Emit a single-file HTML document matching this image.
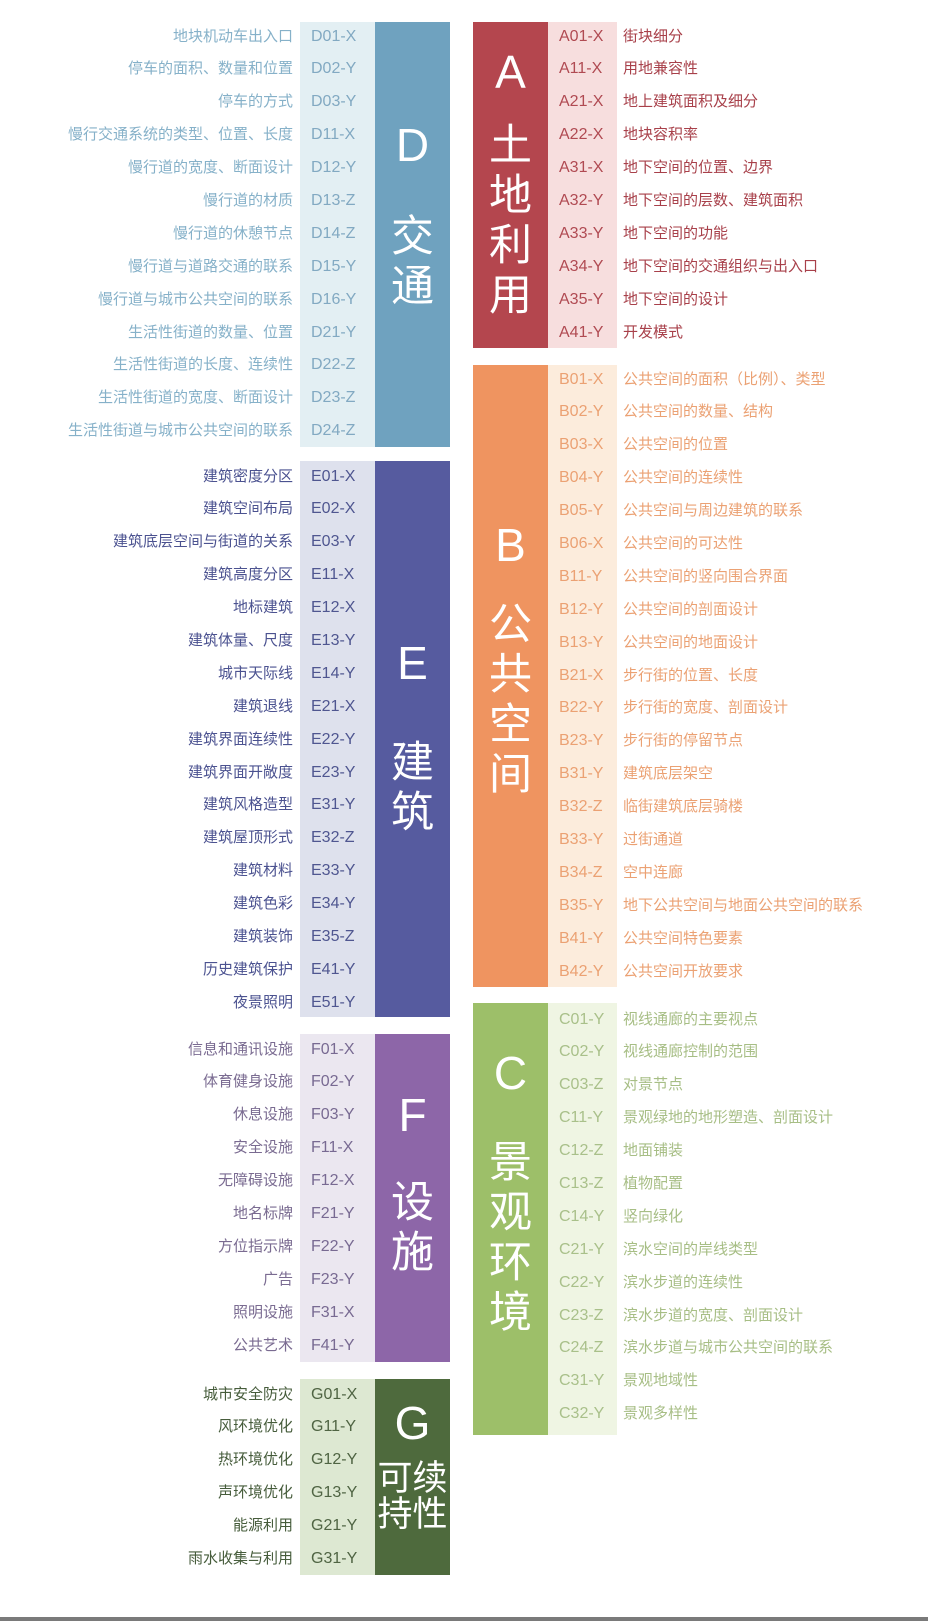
<!DOCTYPE html>
<html><head><meta charset="utf-8"><style>
body{margin:0;width:928px;height:1621px;background:#fff;position:relative;overflow:hidden;font-family:"Liberation Sans","Noto Sans CJK SC",sans-serif}
.abs{position:absolute}
.rows div{height:32.9px;line-height:32.9px;white-space:nowrap}
.lab{font-size:15px;text-align:right;width:293px;left:0}
.rlab{font-size:15px;left:623px}
.code{font-size:16px}
.bar{color:#fff;text-align:center}
.big{font-size:46px;line-height:50px;font-family:"Liberation Sans",sans-serif}
.cn{font-size:43px;line-height:50px;font-family:"Noto Sans CJK SC",sans-serif}
</style></head><body>
<div class="abs" style="left:300px;top:22px;width:75px;height:425px;background:#e3eff3"></div>
<div class="abs" style="left:375px;top:22px;width:75px;height:425px;background:#6fa2bf"></div>
<div class="abs" style="left:300px;top:461px;width:75px;height:556px;background:#dee1ed"></div>
<div class="abs" style="left:375px;top:461px;width:75px;height:556px;background:#565b9f"></div>
<div class="abs" style="left:300px;top:1034px;width:75px;height:328px;background:#ebe7f0"></div>
<div class="abs" style="left:375px;top:1034px;width:75px;height:328px;background:#8d66a8"></div>
<div class="abs" style="left:300px;top:1379px;width:75px;height:196px;background:#dde8d2"></div>
<div class="abs" style="left:375px;top:1379px;width:75px;height:196px;background:#4e6a3d"></div>

<div class="abs" style="left:473px;top:22px;width:75px;height:326px;background:#b4464e"></div>
<div class="abs" style="left:548px;top:22px;width:69px;height:326px;background:#f7dede"></div>
<div class="abs" style="left:473px;top:365px;width:75px;height:622px;background:#ef9460"></div>
<div class="abs" style="left:548px;top:365px;width:69px;height:622px;background:#fcecdc"></div>
<div class="abs" style="left:473px;top:1003px;width:75px;height:432px;background:#9dbf69"></div>
<div class="abs" style="left:548px;top:1003px;width:69px;height:432px;background:#eff5e3"></div>

<div class="abs bar" style="left:375px;width:75px;top:120px"><div class="big">D</div><div class="cn" style="margin-top:38px">交<br>通</div></div>
<div class="abs bar" style="left:375px;width:75px;top:638px"><div class="big">E</div><div class="cn" style="margin-top:46px">建<br>筑</div></div>
<div class="abs bar" style="left:375px;width:75px;top:1090px"><div class="big">F</div><div class="cn" style="margin-top:34px">设<br>施</div></div>
<div class="abs bar" style="left:375px;width:75px;top:1398px"><div class="big">G</div><div style="font-family:'Noto Sans CJK SC',sans-serif;font-size:35px;line-height:36px;margin-top:10px">可续<br>持性</div></div>
<div class="abs bar" style="left:473px;width:75px;top:47px"><div class="big">A</div><div class="cn" style="margin-top:20px">土<br>地<br>利<br>用</div></div>
<div class="abs bar" style="left:473px;width:75px;top:520px"><div class="big">B</div><div class="cn" style="margin-top:26px">公<br>共<br>空<br>间</div></div>
<div class="abs bar" style="left:473px;width:75px;top:1048px"><div class="big">C</div><div class="cn" style="margin-top:36px">景<br>观<br>环<br>境</div></div>

<div class="abs rows lab" style="top:20.5px;color:#86b1c9"><div>地块机动车出入口</div><div>停车的面积、数量和位置</div><div>停车的方式</div><div>慢行交通系统的类型、位置、长度</div><div>慢行道的宽度、断面设计</div><div>慢行道的材质</div><div>慢行道的休憩节点</div><div>慢行道与道路交通的联系</div><div>慢行道与城市公共空间的联系</div><div>生活性街道的数量、位置</div><div>生活性街道的长度、连续性</div><div>生活性街道的宽度、断面设计</div><div>生活性街道与城市公共空间的联系</div></div>
<div class="abs rows code" style="left:311px;top:20.5px;color:#82a9c2"><div>D01-X</div><div>D02-Y</div><div>D03-Y</div><div>D11-X</div><div>D12-Y</div><div>D13-Z</div><div>D14-Z</div><div>D15-Y</div><div>D16-Y</div><div>D21-Y</div><div>D22-Z</div><div>D23-Z</div><div>D24-Z</div></div>
<div class="abs rows lab" style="top:460.5px;color:#4b5290"><div>建筑密度分区</div><div>建筑空间布局</div><div>建筑底层空间与街道的关系</div><div>建筑高度分区</div><div>地标建筑</div><div>建筑体量、尺度</div><div>城市天际线</div><div>建筑退线</div><div>建筑界面连续性</div><div>建筑界面开敞度</div><div>建筑风格造型</div><div>建筑屋顶形式</div><div>建筑材料</div><div>建筑色彩</div><div>建筑装饰</div><div>历史建筑保护</div><div>夜景照明</div></div>
<div class="abs rows code" style="left:311px;top:460.5px;color:#4f5690"><div>E01-X</div><div>E02-X</div><div>E03-Y</div><div>E11-X</div><div>E12-X</div><div>E13-Y</div><div>E14-Y</div><div>E21-X</div><div>E22-Y</div><div>E23-Y</div><div>E31-Y</div><div>E32-Z</div><div>E33-Y</div><div>E34-Y</div><div>E35-Z</div><div>E41-Y</div><div>E51-Y</div></div>
<div class="abs rows lab" style="top:1033.5px;color:#7a6b91"><div>信息和通讯设施</div><div>体育健身设施</div><div>休息设施</div><div>安全设施</div><div>无障碍设施</div><div>地名标牌</div><div>方位指示牌</div><div>广告</div><div>照明设施</div><div>公共艺术</div></div>
<div class="abs rows code" style="left:311px;top:1033.5px;color:#786a92"><div>F01-X</div><div>F02-Y</div><div>F03-Y</div><div>F11-X</div><div>F12-X</div><div>F21-Y</div><div>F22-Y</div><div>F23-Y</div><div>F31-X</div><div>F41-Y</div></div>
<div class="abs rows lab" style="top:1378.5px;color:#465c3b"><div>城市安全防灾</div><div>风环境优化</div><div>热环境优化</div><div>声环境优化</div><div>能源利用</div><div>雨水收集与利用</div></div>
<div class="abs rows code" style="left:311px;top:1378.5px;color:#4f6443"><div>G01-X</div><div>G11-Y</div><div>G12-Y</div><div>G13-Y</div><div>G21-Y</div><div>G31-Y</div></div>
<div class="abs rows code" style="left:559px;top:20.5px;color:#b04a52"><div>A01-X</div><div>A11-X</div><div>A21-X</div><div>A22-X</div><div>A31-X</div><div>A32-Y</div><div>A33-Y</div><div>A34-Y</div><div>A35-Y</div><div>A41-Y</div></div>
<div class="abs rows rlab" style="top:20.5px;color:#a8404a"><div>街块细分</div><div>用地兼容性</div><div>地上建筑面积及细分</div><div>地块容积率</div><div>地下空间的位置、边界</div><div>地下空间的层数、建筑面积</div><div>地下空间的功能</div><div>地下空间的交通组织与出入口</div><div>地下空间的设计</div><div>开发模式</div></div>
<div class="abs rows code" style="left:559px;top:363.5px;color:#eba173"><div>B01-X</div><div>B02-Y</div><div>B03-X</div><div>B04-Y</div><div>B05-Y</div><div>B06-X</div><div>B11-Y</div><div>B12-Y</div><div>B13-Y</div><div>B21-X</div><div>B22-Y</div><div>B23-Y</div><div>B31-Y</div><div>B32-Z</div><div>B33-Y</div><div>B34-Z</div><div>B35-Y</div><div>B41-Y</div><div>B42-Y</div></div>
<div class="abs rows rlab" style="top:363.5px;color:#eba173"><div>公共空间的面积（比例）、类型</div><div>公共空间的数量、结构</div><div>公共空间的位置</div><div>公共空间的连续性</div><div>公共空间与周边建筑的联系</div><div>公共空间的可达性</div><div>公共空间的竖向围合界面</div><div>公共空间的剖面设计</div><div>公共空间的地面设计</div><div>步行街的位置、长度</div><div>步行街的宽度、剖面设计</div><div>步行街的停留节点</div><div>建筑底层架空</div><div>临街建筑底层骑楼</div><div>过街通道</div><div>空中连廊</div><div>地下公共空间与地面公共空间的联系</div><div>公共空间特色要素</div><div>公共空间开放要求</div></div>
<div class="abs rows code" style="left:559px;top:1003.5px;color:#a9c08a"><div>C01-Y</div><div>C02-Y</div><div>C03-Z</div><div>C11-Y</div><div>C12-Z</div><div>C13-Z</div><div>C14-Y</div><div>C21-Y</div><div>C22-Y</div><div>C23-Z</div><div>C24-Z</div><div>C31-Y</div><div>C32-Y</div></div>
<div class="abs rows rlab" style="top:1003.5px;color:#a7be85"><div>视线通廊的主要视点</div><div>视线通廊控制的范围</div><div>对景节点</div><div>景观绿地的地形塑造、剖面设计</div><div>地面铺装</div><div>植物配置</div><div>竖向绿化</div><div>滨水空间的岸线类型</div><div>滨水步道的连续性</div><div>滨水步道的宽度、剖面设计</div><div>滨水步道与城市公共空间的联系</div><div>景观地域性</div><div>景观多样性</div></div>

<div class="abs" style="left:0;top:1617px;width:928px;height:4px;background:#7a7a7a"></div>
</body></html>
